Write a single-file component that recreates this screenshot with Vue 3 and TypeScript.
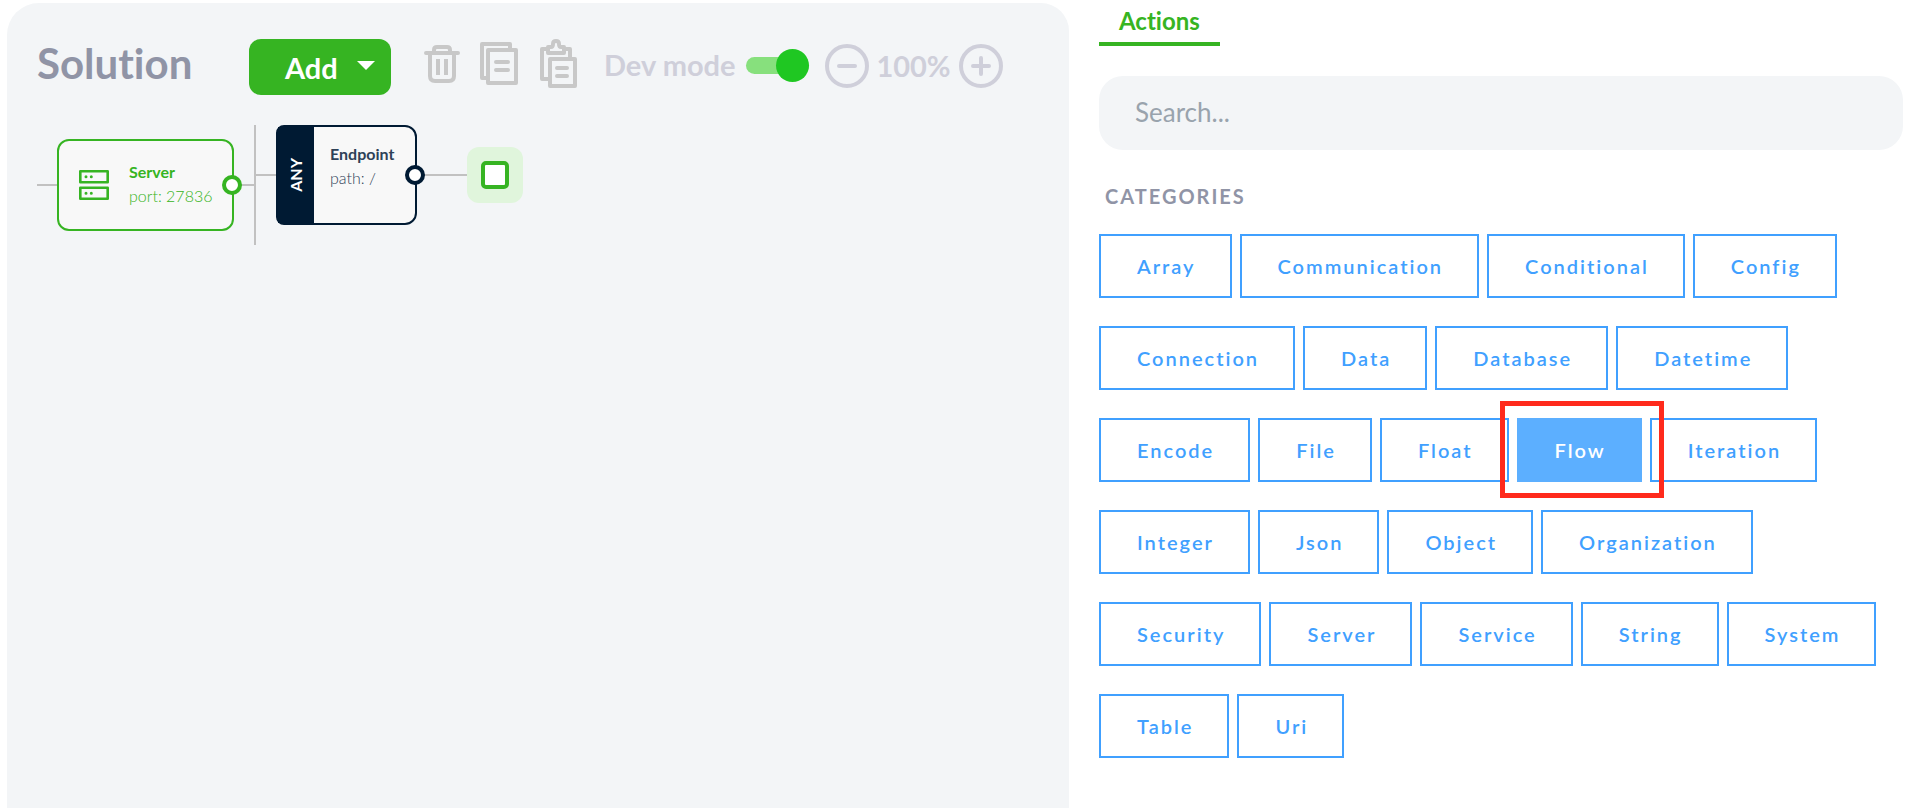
<script setup lang="ts">
import { ref } from 'vue'

const devMode = ref(true)
const query = ref('')
const selected = ref('Flow')
const zoom = ref(100)

const categories: string[] = [
  'Array', 'Communication', 'Conditional', 'Config',
  'Connection', 'Data', 'Database', 'Datetime',
  'Encode', 'File', 'Float', 'Flow', 'Iteration',
  'Integer', 'Json', 'Object', 'Organization',
  'Security', 'Server', 'Service', 'String', 'System',
  'Table', 'Uri',
]
</script>

<template>
  <div class="page">
    <main class="solution">
      <header class="toolbar">
        <h1 class="title">Solution</h1>
        <button class="add" type="button">
          Add
          <svg class="caret" viewBox="0 0 18 9" aria-hidden="true"><path d="M0 0h18L9 9z" /></svg>
        </button>
        <div class="tools">
          <button class="tool" type="button" aria-label="Delete">
            <svg width="36" height="50" viewBox="0 0 36 50">
              <path d="M2 14h32M10 13v-2q0-3 3-3h10q3 0 3 3v2M6 15v22q0 5 5 5h14q5 0 5-5V15" />
              <path class="butt" d="M14 20v16M22 20v16" />
            </svg>
          </button>
          <button class="tool" type="button" aria-label="Copy">
            <svg width="40" height="50" viewBox="0 0 40 50">
              <path class="butt" d="M6 39H2V5h28v6M8 11h28v33H8z" />
              <path d="M16 23h12M16 31h12" />
            </svg>
          </button>
          <button class="tool" type="button" aria-label="Paste">
            <svg width="38" height="50" viewBox="0 0 38 50">
              <path class="butt" d="M8 40H2V10h6M24 10h6v8M10 20h25v27H10z" />
              <path d="M8 14V8h3q2 0 2-3 0-3 3-3t3 3q0 3 2 3h3v6zM17 29h10M17 37h10" />
            </svg>
          </button>
        </div>
        <label class="dev">
          Dev mode
          <input v-model="devMode" class="switch" type="checkbox" />
        </label>
        <div class="zoom">
          <button class="round-button" type="button" aria-label="Zoom out" @click="zoom -= 10">
            <svg width="44" height="44" viewBox="0 0 44 44"><circle cx="22" cy="22" r="20" /><path d="M14 22h16" /></svg>
          </button>
          <span class="percent">{{ zoom }}%</span>
          <button class="round-button" type="button" aria-label="Zoom in" @click="zoom += 10">
            <svg width="44" height="44" viewBox="0 0 44 44"><circle cx="22" cy="22" r="20" /><path d="M14 22h16M22 14v16" /></svg>
          </button>
        </div>
      </header>

      <section class="canvas" aria-label="Flow diagram">
        <svg class="wires" width="500" height="140" viewBox="0 0 500 140" aria-hidden="true">
          <path d="M0 70h218M218 10v120M218 60h212" />
        </svg>
        <article class="node server">
          <svg class="server-icon" width="30" height="30" viewBox="0 0 30 30" aria-hidden="true">
            <path d="M1.3 1.3h27.4v11H1.3zM1.3 17.7h27.4v11H1.3z" />
            <path class="dots" d="M7 6.8h0M12.3 6.8h0M7 23.2h0M12.3 23.2h0" />
          </svg>
          <div class="node-text">
            <strong>Server</strong>
            <span>port: 27836</span>
          </div>
          <i class="port"></i>
        </article>
        <article class="node endpoint">
          <div class="method"><span>ANY</span></div>
          <div class="node-text">
            <strong>Endpoint</strong>
            <span>path: /</span>
          </div>
          <i class="port"></i>
        </article>
        <button class="drop" type="button" aria-label="Add action"><i></i></button>
      </section>
    </main>

    <aside class="side">
      <nav class="tabs"><a class="tab" href="#actions">Actions</a></nav>
      <input v-model="query" class="search" type="text" placeholder="Search..." aria-label="Search actions" />
      <h2 class="heading">CATEGORIES</h2>
      <div class="categories">
        <button
          v-for="name in categories"
          :key="name"
          type="button"
          class="category"
          :class="{ selected: name === selected }"
          @click="selected = name"
        >{{ name }}</button>
      </div>
    </aside>
  </div>
</template>

<style>
body { margin: 0; background: #fff; }
</style>

<style scoped>
.page {
  --green: #36b422;
  --navy: #001a33;
  --blue: #40a0ff;
  display: grid;
  grid-template-columns: minmax(0, 1062fr) minmax(0, 804fr);
  gap: 30px;
  min-height: 100vh;
  box-sizing: border-box;
  padding: 0 26px 0 7px;
  font-family: Lato, "Open Sans", sans-serif;
  font-variant-ligatures: none;
}
button { font: inherit; cursor: pointer; }

.solution {
  margin-top: 3px;
  background: #f3f5f7;
  border-radius: 32px 28px 0 0;
}
.toolbar {
  display: flex;
  align-items: center;
  height: 128px;
  box-sizing: border-box;
  padding: 0 30px;
}
.title {
  width: 212px;
  margin: 0 0 8px;
  font-size: 42px;
  line-height: 48px;
  font-weight: 700;
  color: #9094a6;
}
.add {
  display: flex;
  align-items: center;
  justify-content: space-between;
  width: 142px;
  height: 56px;
  padding: 0 16px 0 36px;
  border: 0;
  border-radius: 12px;
  background: var(--green);
  color: #fff;
  font-size: 29px;
  font-weight: 700;
}
.caret { width: 18px; height: 9px; margin-bottom: 4px; fill: #fff; }
.tools { display: flex; gap: 20px; margin: 0 0 6px 33px; }
.tool, .round-button { display: flex; padding: 0; border: 0; background: none; }
.tool svg { fill: none; stroke: #c8c8c8; stroke-width: 4; stroke-linecap: round; stroke-linejoin: round; }
.tool .butt { stroke-linecap: butt; }
.dev {
  display: flex;
  align-items: center;
  gap: 10px;
  margin: 0 0 4px 26px;
  color: #cfcfda;
  font-size: 29px;
  line-height: 36px;
  font-weight: 700;
  white-space: nowrap;
}
.switch {
  appearance: none;
  display: flex;
  align-items: center;
  width: 63px;
  height: 17px;
  margin: 0;
  border-radius: 9px;
  background: #87e07d;
}
.switch::before {
  content: "";
  flex: none;
  width: 33px;
  height: 33px;
  border-radius: 50%;
  background: #1fc722;
}
.switch:checked::before { margin-left: auto; }
.zoom { display: flex; align-items: center; margin: 0 0 2px 16px; }
.round-button svg { fill: none; stroke: #cfcfda; stroke-width: 4; stroke-linecap: round; }
.percent {
  width: 90px;
  text-align: center;
  color: #cfcfda;
  font-size: 29px;
  line-height: 36px;
  font-weight: 700;
}

/* Free canvas: nodes are placed by coordinate. */
.canvas { position: relative; height: 140px; margin: -16px 30px 0; }
.wires { position: absolute; left: 0; top: 0; fill: none; stroke: #c1c1c1; stroke-width: 2; }
.node {
  position: absolute;
  box-sizing: border-box;
  display: flex;
  background: #f8f8f8;
  font-size: 16px;
  line-height: 24px;
}
.node-text { display: flex; flex-direction: column; white-space: nowrap; }
.node-text strong { font-weight: 700; }
.node-text span { font-weight: 300; }
.server {
  left: 20px;
  top: 24px;
  width: 177px;
  height: 92px;
  align-items: center;
  gap: 20px;
  padding-left: 20px;
  border: 2px solid var(--green);
  border-radius: 12px;
  color: var(--green);
}
.server .node-text { margin-bottom: 2px; }
.server-icon { fill: none; stroke: var(--green); stroke-width: 2.6; stroke-linecap: round; stroke-linejoin: round; }
.dots { stroke-width: 3; }
.endpoint {
  left: 239px;
  top: 10px;
  width: 141px;
  height: 100px;
  gap: 16px;
  border: 2px solid var(--navy);
  border-radius: 8px 12px 12px 8px;
  color: #2e4157;
}
.endpoint .node-text { padding-top: 15px; }
.method {
  display: flex;
  align-items: center;
  justify-content: center;
  width: 36px;
  background: var(--navy);
  color: #fff;
  font-weight: 700;
}
.method span { writing-mode: vertical-rl; transform: rotate(180deg); }
.port {
  position: absolute;
  right: -10px;
  top: 50%;
  width: 12px;
  height: 12px;
  margin-top: -10px;
  border: 4px solid var(--green);
  border-radius: 50%;
  background: #fff;
}
.endpoint .port { border-color: var(--navy); }
.drop {
  position: absolute;
  left: 430px;
  top: 32px;
  display: grid;
  place-items: center;
  width: 56px;
  height: 56px;
  padding: 0;
  border: 0;
  border-radius: 12px;
  background: #e0f5dc;
}
.drop i {
  width: 20px;
  height: 20px;
  border: 4px solid var(--green);
  border-radius: 5px;
  background: #fff;
}

.tabs { display: flex; }
.tab {
  padding: 6px 20px;
  border-bottom: 4px solid var(--green);
  color: var(--green);
  font-size: 24px;
  line-height: 30px;
  font-weight: 700;
  text-decoration: none;
}
.search {
  display: block;
  box-sizing: border-box;
  width: 100%;
  height: 74px;
  margin: 30px 0 0;
  padding: 0 36px 2px;
  border: 0;
  border-radius: 24px;
  background: #f3f5f7;
  font: 400 26px/32px Lato, "Open Sans", sans-serif;
}
.search::placeholder { color: #99a3ad; opacity: 1; }
.heading {
  margin: 34px 0 26px 6px;
  font-size: 20px;
  line-height: 24px;
  font-weight: 700;
  letter-spacing: 2px;
  color: #9094a6;
}
.categories { display: flex; flex-wrap: wrap; gap: 28px 8px; }
.category {
  position: relative;
  height: 64px;
  padding: 0 34px 0 36px;
  border: 2px solid var(--blue);
  background: #fff;
  color: var(--blue);
  font-size: 20px;
  font-weight: 600;
  letter-spacing: 2px;
}
.category.selected { border-color: #5cafff; background: #5cafff; color: #fff; }
/* Red marker drawn around the chosen category, over its neighbours. */
.category.selected::after {
  content: "";
  position: absolute;
  z-index: 1;
  inset: -19px -24px -18px -19px;
  border: 5px solid #ff2a1c;
  pointer-events: none;
}
</style>
